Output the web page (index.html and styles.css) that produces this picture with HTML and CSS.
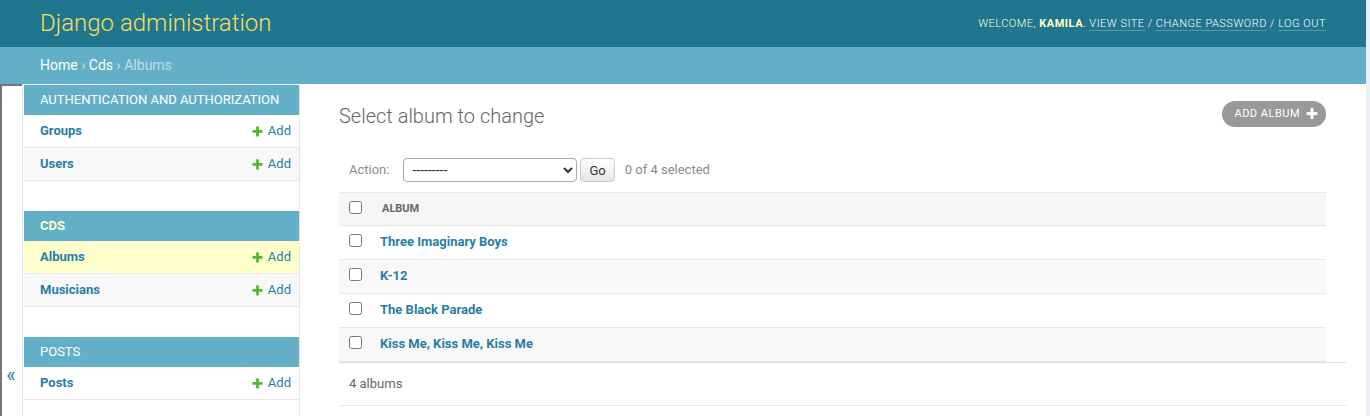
FILE: index.html
```html
<!DOCTYPE html>
<html lang="en">
<head>
<meta charset="utf-8">
<title>Select album to change | Django site admin</title>
<link rel="stylesheet" href="styles.css">
</head>
<body>
<div class="page">
  <header class="header">
    <h1 class="site-name"><a href="#">Django administration</a></h1>
    <div class="user-tools">Welcome, <strong>kamila</strong>. <a href="#">View site</a> / <a href="#">Change password</a> / <a href="#">Log out</a></div>
  </header>
  <div class="breadcrumbs"><a href="#">Home</a> › <a href="#">Cds</a> › Albums</div>
  <div class="main">
    <button class="toggle-nav" type="button">«</button>
    <nav class="sidebar">
      <div class="module">
        <div class="caption"><a href="#">Authentication and Authorization</a></div>
        <div class="model-row row1"><a class="model" href="#">Groups</a><a class="addlink" href="#"><svg class="add-icon" width="13" height="13" viewBox="0 0 1792 1792"><path fill="#4fb832" d="M1600 796v192q0 40-28 68t-68 28h-416v416q0 40-28 68t-68 28h-192q-40 0-68-28t-28-68v-416h-416q-40 0-68-28t-28-68v-192q0-40 28-68t68-28h416v-416q0-40 28-68t68-28h192q40 0 68 28t28 68v416h416q40 0 68 28t28 68z"/></svg>Add</a></div>
        <div class="model-row row2"><a class="model" href="#">Users</a><a class="addlink" href="#"><svg class="add-icon" width="13" height="13" viewBox="0 0 1792 1792"><path fill="#4fb832" d="M1600 796v192q0 40-28 68t-68 28h-416v416q0 40-28 68t-68 28h-192q-40 0-68-28t-28-68v-416h-416q-40 0-68-28t-28-68v-192q0-40 28-68t68-28h416v-416q0-40 28-68t68-28h192q40 0 68 28t28 68v416h416q40 0 68 28t28 68z"/></svg>Add</a></div>
      </div>
      <div class="module">
        <div class="caption current-app"><a href="#">Cds</a></div>
        <div class="model-row current-model"><a class="model" href="#">Albums</a><a class="addlink" href="#"><svg class="add-icon" width="13" height="13" viewBox="0 0 1792 1792"><path fill="#4fb832" d="M1600 796v192q0 40-28 68t-68 28h-416v416q0 40-28 68t-68 28h-192q-40 0-68-28t-28-68v-416h-416q-40 0-68-28t-28-68v-192q0-40 28-68t68-28h416v-416q0-40 28-68t68-28h192q40 0 68 28t28 68v416h416q40 0 68 28t28 68z"/></svg>Add</a></div>
        <div class="model-row row2"><a class="model" href="#">Musicians</a><a class="addlink" href="#"><svg class="add-icon" width="13" height="13" viewBox="0 0 1792 1792"><path fill="#4fb832" d="M1600 796v192q0 40-28 68t-68 28h-416v416q0 40-28 68t-68 28h-192q-40 0-68-28t-28-68v-416h-416q-40 0-68-28t-28-68v-192q0-40 28-68t68-28h416v-416q0-40 28-68t68-28h192q40 0 68 28t28 68v416h416q40 0 68 28t28 68z"/></svg>Add</a></div>
      </div>
      <div class="module">
        <div class="caption"><a href="#">Posts</a></div>
        <div class="model-row row1"><a class="model" href="#">Posts</a><a class="addlink" href="#"><svg class="add-icon" width="13" height="13" viewBox="0 0 1792 1792"><path fill="#4fb832" d="M1600 796v192q0 40-28 68t-68 28h-416v416q0 40-28 68t-68 28h-192q-40 0-68-28t-28-68v-416h-416q-40 0-68-28t-28-68v-192q0-40 28-68t68-28h416v-416q0-40 28-68t68-28h192q40 0 68 28t28 68v416h416q40 0 68 28t28 68z"/></svg>Add</a></div>
      </div>
    </nav>
    <main class="content">
      <div class="content-head">
        <h1 class="title">Select album to change</h1>
        <a class="object-tool" href="#">Add album<svg class="tool-icon" width="14" height="14" viewBox="0 0 1792 1792"><path fill="#fff" d="M1600 736v192q0 40-28 68t-68 28h-416v416q0 40-28 68t-68 28h-192q-40 0-68-28t-28-68v-416h-416q-40 0-68-28t-28-68v-192q0-40 28-68t68-28h416v-416q0-40 28-68t68-28h192q40 0 68 28t28 68v416h416q40 0 68 28t28 68z"/></svg></a>
      </div>
      <div class="changelist">
        <div class="actions">
          <label class="action-label">Action:</label>
          <select class="action-select"><option>---------</option><option>Delete selected albums</option></select>
          <button class="go" type="button">Go</button>
          <span class="counter">0 of 4 selected</span>
        </div>
        <table class="results">
          <thead>
            <tr><th class="cb-col"><input type="checkbox"></th><th class="col-head">Album</th></tr>
          </thead>
          <tbody>
            <tr class="row1"><td class="cb-col"><input type="checkbox"></td><th class="item"><a href="#">Three Imaginary Boys</a></th></tr>
            <tr class="row2"><td class="cb-col"><input type="checkbox"></td><th class="item"><a href="#">K-12</a></th></tr>
            <tr class="row1"><td class="cb-col"><input type="checkbox"></td><th class="item"><a href="#">The Black Parade</a></th></tr>
            <tr class="row2"><td class="cb-col"><input type="checkbox"></td><th class="item"><a href="#">Kiss Me, Kiss Me, Kiss Me</a></th></tr>
          </tbody>
        </table>
        <p class="paginator">4 albums</p>
      </div>
    </main>
  </div>
</div>
</body>
</html>
```
FILE: styles.css
```css
html {
  background: #eeeef7;
  height: 100%;
}
body {
  margin: 0;
  font-family: Roboto, "DejaVu Sans", Arial, sans-serif;
  font-size: 14px;
  color: #333;
  overflow: hidden;
}
a {
  text-decoration: none;
  color: #277ea6;
}
.page {
  width: 1366px;
  background: #fff;
  min-height: 100vh;
}
.header {
  display: flex;
  justify-content: space-between;
  align-items: center;
  height: 47px;
  box-sizing: border-box;
  padding: 0 40px;
  background: #21768f;
}
.site-name {
  margin: 0;
  font-size: 24px;
  font-weight: 300;
  line-height: 27px;
}
.site-name a {
  color: #f5dd5d;
}
.user-tools {
  font-size: 11px;
  font-weight: 300;
  letter-spacing: 0.5px;
  text-transform: uppercase;
  color: #ffc;
  line-height: 14px;
  padding-top: 1px;
}
.user-tools strong {
  font-weight: 700;
}
.user-tools a {
  color: #fff;
  border-bottom: 1px solid rgba(255, 255, 255, 0.25);
}
.breadcrumbs {
  background: #63afc7;
  padding: 10px 40px;
  line-height: 17px;
  font-size: 14px;
  color: #c4dce8;
}
.breadcrumbs a {
  color: #fff;
}
.main {
  display: flex;
  height: 582px;
}
.toggle-nav {
  flex: 0 0 23px;
  width: 23px;
  padding: 0;
  border: 0;
  border-right: 1px solid #e8e8e8;
  background: #fff;
  box-shadow: inset 2px 2px 0 #767676;
  color: #277ea6;
  font-family: Roboto, sans-serif;
  font-size: 20px;
  line-height: 23px;
}
.sidebar {
  flex: 0 0 275px;
  width: 275px;
  padding: 1px 0 0 1px;
  border-right: 1px solid #e8e8e8;
}
.module {
  margin-bottom: 30px;
}
.caption {
  background: #63afc7;
  padding: 8px 16px;
  font-size: 13px;
  line-height: 14px;
  letter-spacing: 0;
  text-transform: uppercase;
  white-space: nowrap;
}
.caption a {
  color: #fff;
}
.caption.current-app a {
  color: #ffc;
  font-weight: 700;
}
.model-row {
  display: flex;
  justify-content: space-between;
  padding: 8px 8px 8px 16px;
  font-size: 13px;
  line-height: 16px;
  border-bottom: 1px solid #e8e8e8;
}
.row1 {
  background: #fff;
}
.row2 {
  background: #f8f8f8;
}
.current-model {
  background: #ffc;
}
.model {
  font-weight: 700;
}
.addlink {
  display: flex;
  align-items: center;
}
.add-icon {
  margin-right: 4px;
}
.content {
  flex: 1;
  padding: 20px 40px 0 39px;
}
.content-head {
  display: flex;
  justify-content: space-between;
  align-items: flex-start;
  margin-bottom: 20px;
}
.title {
  margin: 0;
  font-size: 20px;
  font-weight: 300;
  line-height: 24px;
  color: #666;
}
.object-tool {
  display: flex;
  align-items: center;
  margin-top: -3px;
  padding: 3px 7px 3px 12px;
  line-height: 20px;
  background: #999;
  color: #fff;
  font-size: 11px;
  letter-spacing: 0.5px;
  text-transform: uppercase;
  border-radius: 15px;
}
.tool-icon {
  margin-left: 5px;
}
.actions {
  display: flex;
  align-items: center;
  padding: 10px;
  line-height: 24px;
  color: #8c8c8c;
  font-size: 13px;
}
.action-select {
  width: 174px;
  height: 24px;
  margin-left: 14px;
  padding: 0 0 0 4px;
  border: 1px solid #aaa;
  border-radius: 4px;
  background: #fff;
  color: #333;
  font-family: Roboto, sans-serif;
  font-size: 14px;
}
.go {
  margin-left: 3px;
  height: 24px;
  padding: 0 8px;
  border: 1px solid #ccc;
  border-radius: 4px;
  background: #fff;
  box-shadow: 0 -15px 20px -10px rgba(0, 0, 0, 0.15) inset;
  font-family: Roboto, sans-serif;
  font-size: 13px;
  color: #333;
}
.counter {
  margin-left: 10px;
}
.results {
  width: 100%;
  border-collapse: collapse;
}
.results thead th {
  background: #f6f6f6;
  border-top: 1px solid #e8e8e8;
  border-bottom: 1px solid #e8e8e8;
  padding: 8px 10px;
  font-size: 11px;
  line-height: 16px;
  text-align: left;
  color: #666;
  text-transform: uppercase;
  font-weight: 700;
}
.results td,
.results tbody th {
  padding: 7px 10px 9px 10px;
  font-size: 13px;
  line-height: 17px;
  text-align: left;
  border-bottom: 1px solid #e8e8e8;
  vertical-align: top;
}
.results .cb-col {
  width: 13px;
  padding: 8px 10px 0 10px;
  vertical-align: top;
}
.results input[type="checkbox"] {
  display: block;
  margin: 0;
  width: 13px;
  height: 13px;
}
.results .item {
  font-weight: 700;
  padding-left: 8px;
}
.results .col-head {
  padding-left: 10px;
}
.paginator {
  margin: 0 -20px 0 0;
  padding: 10px;
  font-size: 13px;
  line-height: 22px;
  color: #666;
  border-top: 1px solid #ddd;
  border-bottom: 1px solid #e8e8e8;
}
```
